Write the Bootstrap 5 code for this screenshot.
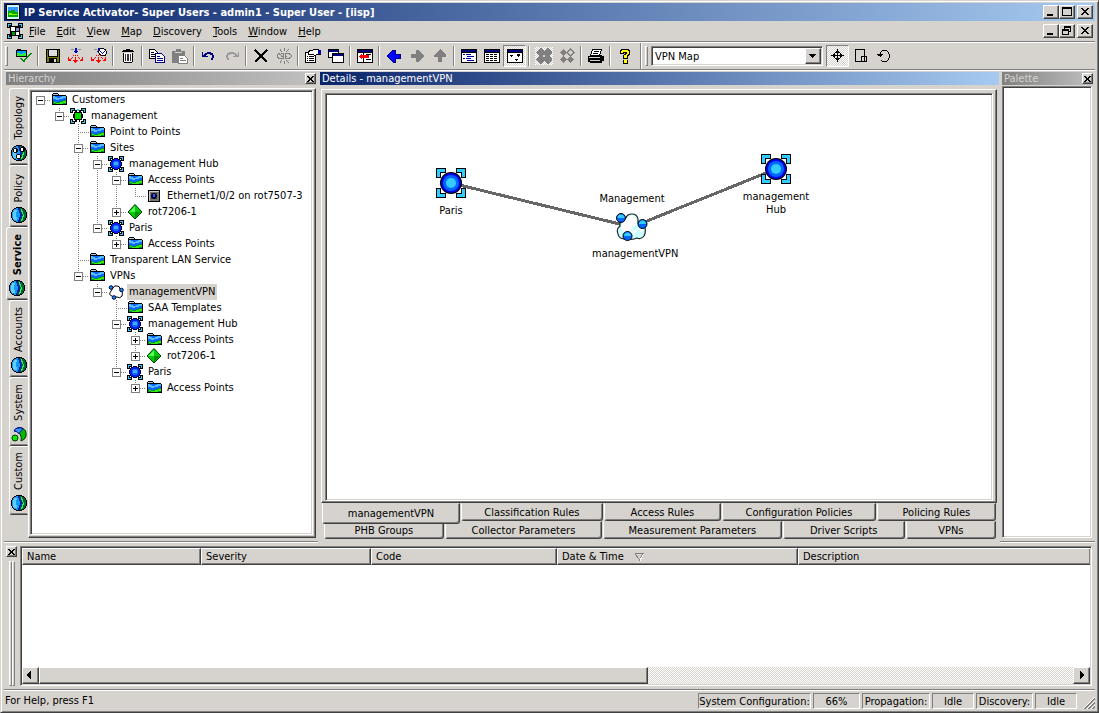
<!DOCTYPE html>
<html lang="en">
<head>
<meta charset="utf-8">
<meta name="viewport" content="width=device-width, initial-scale=1">
<title>IP Service Activator</title>
<link rel="stylesheet" href="https://cdn.jsdelivr.net/npm/bootstrap@5.3.0/dist/css/bootstrap.min.css">
<style>
:root{--face:#d6d3ce;--shade:#808080;--dark:#404040;--lite:#fff}
body{background:var(--face);color:#000;font:11px/13px "DejaVu Sans Condensed","DejaVu Sans","Liberation Sans",sans-serif}
button,select{font:inherit;color:inherit;background:var(--face);border:0;padding:0;border-radius:0}
svg{display:block;flex:none;shape-rendering:crispEdges}
.appwin{min-height:100vh;border:1px solid;border-color:var(--face) var(--dark) var(--dark) var(--face);box-shadow:inset 1px 1px var(--lite),inset -1px -1px var(--shade);padding:2px 3px}
.raised{border:1px solid;border-color:var(--lite) var(--dark) var(--dark) var(--lite);box-shadow:inset -1px -1px var(--shade)}
.sunken{border:1px solid;border-color:var(--shade) var(--lite) var(--lite) var(--shade);box-shadow:inset 1px 1px var(--dark),inset -1px -1px var(--face);padding:1px;background:#fff}
.groove-b{border-bottom:1px solid var(--shade);box-shadow:0 1px var(--lite);margin-bottom:1px}
.titlebar{height:18px;background:linear-gradient(90deg,#0a246a,#a6caf0);color:#fff;font-weight:bold;padding:0 2px}
.winbtn{width:16px;height:14px}
.winbtn.apart{margin-left:2px}
.menubar{height:21px;padding:0 2px 0 3px}
.menubar a{color:#000;text-decoration:none;padding:0 5px 0 6px}
.toolbar{height:27px;padding-left:1px}
.grip{width:3px;height:20px;border:1px solid;border-color:var(--lite) var(--shade) var(--shade) var(--lite)}
.tool{width:23px;height:22px}
.tool[aria-pressed=true]{border:1px solid;border-color:var(--shade) var(--lite) var(--lite) var(--shade)}
.dither{background:repeating-conic-gradient(#fff 0 25%,var(--face) 0 50%) 0 0/2px 2px}
.sepv{width:2px;height:20px;margin:0 2px;border-left:1px solid var(--shade);border-right:1px solid var(--lite)}
.sepv.bandend{height:26px;margin:0 3px 0 4px}
.combo{width:172px;height:20px;margin:0 3px}
.combo select{appearance:none;background:#fff;width:100%;height:16px;padding-left:2px;outline:0}
.combo .arrowbox{top:1px;right:1px;width:16px;height:16px;pointer-events:none;background:var(--face)}
.caption{height:13px;margin:1px 2px 0;padding-left:2px}
.cap-off{background:linear-gradient(90deg,#808080,#c0c0c0);color:var(--face)}
.cap-on{background:linear-gradient(90deg,#0a246a,#a6caf0);color:#fff;margin-right:1px}
.closer{width:11px;height:11px}
.side-left{width:314px}
.side-right{width:95px}
.tabbody{margin-top:3px;padding:0 2px 3px 0}
.tabcol{width:24px}
.treeframe{padding:1px 2px 2px 1px}
.mapframe{padding:3px 3px 1px;margin:4px 3px 0}
.palettebox{margin:1px 3px 3px 2px}
.vtab{width:19px;border:1px solid;border-color:var(--lite) transparent var(--dark) var(--lite);border-radius:3px 0 0 3px;box-shadow:inset 0 -1px var(--shade);padding:4px 0 3px}
.vtab.on{width:22px;font-weight:bold}
.vtab span{writing-mode:vertical-rl;transform:rotate(180deg)}
.vtab svg{margin-top:5px}
.h-long{height:77px}
.h-mid{height:69px}
.h-on{height:73px}
.h-short{height:62px}
.tree,.tree ul{list-style:none;margin:0;padding:0}
.tree li{background:repeating-linear-gradient(var(--shade) 0 1px,transparent 1px 2px) 8px 0/1px 100% no-repeat}
.tree li:last-child{background-size:1px 8px}
.tree>li{background:none!important}
.tree ul{padding-left:19px}
.node{height:16px}
.twig{width:19px;height:16px}
.lbl{margin-left:3px;padding:0 2px;height:16px;line-height:15px}
.lbl.sel{background:var(--face)}
.pin{width:80px;text-align:center}
.pin svg{margin:0 auto 6px}
.pin span+svg{margin-top:8px}
.btabs{margin:0 4px 0 5px}
.btab{flex:1 1 0;height:18px;border:1px solid;border-color:var(--face) var(--dark) var(--dark) var(--lite);border-radius:0 0 3px 3px;box-shadow:inset -1px -1px var(--shade);white-space:nowrap;margin-left:1px}
.btab.on{height:21px;margin:0 0 -3px -1px;position:relative;z-index:1}
.dock{padding:3px 0}
.dockside{padding:0 3px 0 2px}
.dockmain{margin-right:3px}
.grid{table-layout:fixed;width:100%;border-collapse:separate;border-spacing:0}
.grid th{height:17px;padding:0 4px;font-weight:normal;background:var(--face)}
.listbody{height:119px}
.sbar{height:17px}
.sbtn{width:17px}
.status{height:19px;padding-left:1px}
.pane{border:1px solid;border-color:var(--shade) var(--lite) var(--lite) var(--shade);height:16px;line-height:15px;margin-left:2px;text-align:center;white-space:nowrap}
.w-cfg{width:113px}
.w-pct{width:47px}
.w-prop{width:68px}
.w-idle{width:42px}
.w-disc{width:57px}
</style>
</head>
<body>
<svg width="0" height="0" class="position-absolute" aria-hidden="true">
<defs>
<symbol id="folder" viewBox="0 0 16 16"><path d="M1 2h1V1h5v1h1v1h7v1h1v9H1z" fill="#000"/><path d="M2 2h5v1H2z" fill="#9cf"/><path d="M2 4h13v8H2z" fill="#16f"/><path d="M2 4h2v1h2v1h3V5h2V4h4v2h-3v1H8v1H5V7H2z" fill="#5bf"/><path d="M2 9h2v1h5V9h3V8h3v4H2z" fill="#084"/><path d="M3 10h2v1h4v-1h3V9h3v2h-3v1H5v-1H3z" fill="#3e0"/></symbol>
<symbol id="brackets" viewBox="0 0 16 16"><path d="M0 0h5v3H3v2H0zM11 0h5v5h-3V3h-2zM0 11h3v2h2v3H0zM13 11h3v5h-5v-3h2z" fill="#000"/><path d="M1 1h3v1H2v2H1zM12 1h3v3h-1V2h-2zM1 12h1v2h2v1H1zM14 12h1v3h-3v-1h2z" fill="#3cf"/></symbol>
<symbol id="site" viewBox="0 0 16 16"><use href="#brackets"/><path d="M6 2h4v1h2v1h1v2h1v4h-1v2h-1v1h-2v1H6v-1H4v-1H3v-2H2V6h1V4h1V3h2z" fill="#003"/><path d="M6 3h4v1h2v2h1v4h-1v2h-2v1H6v-1H4v-2H3V6h1V4h2z" fill="#02e"/><path d="M6 5h4v1h1v4h-1v1H6v-1H5V6h1z" fill="#16f"/><path d="M6 6h4v3H6z" fill="#4af"/></symbol>
<symbol id="cust" viewBox="0 0 16 16"><use href="#brackets"/><path d="M5 2h2v2h2V2h2v2h1v2h1v4h-1v2h-2v2H9v-2H7v2H5v-2H4v-2H3V6h1V4h1z" fill="#000"/><path d="M7 1h2v2H7z" fill="#3cf"/><path d="M5 5h6v6H5z" fill="#0d0"/></symbol>
<symbol id="port" viewBox="0 0 16 16"><path d="M2 2h12v12H2z" fill="#000"/><path d="M3 3h10v1H4v9H3z" fill="#ccc"/><path d="M4 4h9v9H4z" fill="#777"/><path d="M5 5h6v6H5z" fill="#333"/><path d="M7 5h2v1h1v1h1v2h-1v1H9v1H7v-1H6V9H5V7h1V6h1z" fill="#003"/><path d="M7 6h2v3H7z" fill="#36f"/></symbol>
<symbol id="router" viewBox="0 0 16 16"><g shape-rendering="auto"><path d="M8 0.500l7 7.500-7 7-7-7z" fill="#0c0" stroke="#030"/><path d="M8 2v6H2.500z" fill="#5f5"/><path d="M8 14V8h5.500z" fill="#080"/></g></symbol>
<symbol id="vpn" viewBox="0 0 16 16"><g shape-rendering="auto"><path d="M5 4q1-3 4-2 3 0 3 3 4 4 2 7-2 3-5 1-3 1-5-1-4-1-1-5z" fill="#fff" stroke="#000"/><g fill="#09f" stroke="#003"><circle cx="3" cy="3.500" r="1.800"/><circle cx="13.500" cy="6" r="1.800"/><circle cx="6" cy="13.500" r="1.800"/></g></g></symbol>
<symbol id="globe" viewBox="0 0 16 16"><path d="M5 0h6v1h2v1h1v1h1v2h1v6h-1v2h-1v1h-1v1h-2v1H5v-1H3v-1H2v-1H1v-2H0V5h1V3h1V2h1V1h2z" fill="#000"/><path d="M5 1h6v1h2v1h1v2h1v6h-1v2h-1v1h-2v1H5v-1H3v-1H2v-2H1V5h1V3h1V2h2z" fill="#19e"/><path d="M3 3h3v2H5v5h1v3H3v-1H2V5h1z" fill="#6cf"/><path d="M7 1h2v2h1v3h1v4h-1v3H9v2H7v-2h1v-3h1V6H8V3H7z" fill="#02a"/><path d="M9 1h2v1h2v1h1v2h1v6h-1v2h-1v1h-2v1H9v-2h1v-3h1V6h-1V3H9z" fill="#063"/><path d="M10 2h1v2h1v3h1v3h-1v3h-1v1h-1v-2h1V9h1V7h-1V5h-1z" fill="#3e6"/></symbol>
<symbol id="globe2" viewBox="0 0 16 16"><use href="#globe"/><path d="M3 3h3v1h1v3H6v1H3V7H2V4h1zM10 2h3v1h1v3h-1v1h-3V6H9V3h1zM6 9h3v1h1v3H9v1H6v-1H5v-3h1z" fill="#000"/><path d="M3 4h2v3H3zM10 3h2v3h-2zM6 10h3v3H6z" fill="#fff"/></symbol>
<symbol id="sysico" viewBox="0 0 16 16"><g shape-rendering="auto"><path d="M3 5q3-5 8-3 5 2 4 8-1 4-5 5 1-4-1-7-2-3-6-3z" fill="#0b0" stroke="#030"/><path d="M3 4.500q3-4 9-2l-4 5q-2-2-5-3z" fill="#39f" stroke="#00a"/><circle cx="4" cy="12" r="3" fill="#0e0" stroke="#030"/></g></symbol>
<symbol id="bigsite" viewBox="0 0 30 30"><path d="M.5.500h9v4h-5v5h-4zM20.500.500h9v9h-4v-5h-5zM.5 20.500h4v5h5v4h-9zM25.500 20.500h4v9h-9v-4h5z" fill="#3cf" stroke="#000"/><g shape-rendering="auto"><circle cx="15" cy="15" r="11" fill="#000"/><circle cx="15" cy="15" r="10" fill="#00e"/><circle cx="15" cy="15" r="8" fill="#06f"/><circle cx="15" cy="15" r="5" fill="#3cf"/></g></symbol>
<symbol id="bigvpn" viewBox="0 0 32 28"><g shape-rendering="auto"><path d="M10 5q1-4 6-4t6 5v4q6 0 7 5 1 4-1 8-3 4-7 2-4 2-9 1-9 1-10-5-2-5 2-8-1-6 6-8z" fill="#cff" stroke="#222" stroke-width="1.200"/><path d="M11 5q5-5 9 0l1 7-4 1-3 5-5 2-4-4q0-7 6-11z" fill="#fff"/><path d="M8 21h4l2-4 2 4 6-5M24 17l3 1" fill="none" stroke="#fff" stroke-width="2"/><g fill="#06f" stroke="#000"><circle cx="5" cy="5" r="4.500"/><circle cx="26.500" cy="11" r="4.500"/><circle cx="11.500" cy="23" r="4.500"/></g><g fill="#3cf"><path d="M1.500 5a3 3 0 0 1 7 0zM23 11a3 3 0 0 1 7 0zM8 23a3 3 0 0 1 7 0z"/></g></g></symbol>
<symbol id="minus" viewBox="0 0 19 16"><path d="M13 8h1M15 8h1M17 8h1" stroke="#808080" transform="translate(0 .5)"/><path d="M4.500 4.500h8v8h-8z" fill="#fff" stroke="#808080"/><path d="M6 8h5v1H6z"/></symbol>
<symbol id="plus" viewBox="0 0 19 16"><path d="M13 8h1M15 8h1M17 8h1" stroke="#808080" transform="translate(0 .5)"/><path d="M4.500 4.500h8v8h-8z" fill="#fff" stroke="#808080"/><path d="M6 8h5v1H6zM8 6h1v5H8z"/></symbol>
<symbol id="leaf" viewBox="0 0 19 16"><path d="M8 8.500h11" stroke="#808080" stroke-dasharray="1 1"/></symbol>
<symbol id="xx" viewBox="0 0 8 7"><path d="M0 0h2v1h1v1h2V1h1V0h2v1H7v1H6v1H5v1h1v1h1v1h1v1H6V6H5V5H3v1H2v1H0V6h1V5h1V4h1V3H2V2H1V1H0z"/></symbol>
<symbol id="smallx" viewBox="0 0 7 6"><path d="M0 0h2v1h1v1h1V1h1V0h2v1H6v1H5v2h1v1h1v1H5V5H4V4H3v1H2v1H0V5h1V4h1V2H1V1H0z"/></symbol>
<symbol id="win" viewBox="0 0 16 16"><path d="M0 1h16v14H0z"/><path d="M1 5h14v9H1z" fill="#fff"/><path d="M1 2h14v2H1z" fill="#000080"/></symbol>
<symbol id="net" viewBox="0 0 16 16"><path d="M3 1h3v1H3zM10 1h3v1h-3z" fill="#888"/><path d="M7 0h2v3h1v1H9v1H7V4H6V3h1z" fill="#00c"/><path d="M7 7h1v1H7zM5 7h1v1H5zM9 7h1v1H9zM4 9h1v1H4zM10 9h1v1h-1zM3 10h1v1H3zM11 10h1v1h-1zM7 9h1v6H7zM0 9h1v2h1v1h1v1H0zM15 9v4h-3v-1h1v-1h1V9zM5 12h5v1H9v1H8v1H7v-1H6v-1H5zM2 11h1v1H2z" fill="#f00"/></symbol>
<symbol id="larrow" viewBox="0 0 14 14"><path d="M0 7l1-1 5-5h2v4h5v4H8v4H6z"/></symbol>
<symbol id="quad" viewBox="0 0 16 16"><path d="M4 0h1l3 3v1l3-4h1l4 4v1l-3 3 3 3v1l-4 4h-1l-3-3-3 3H4l-4-4v-1l3-3-3-3V4z"/></symbol>
<symbol id="undo" viewBox="0 0 14 12"><path d="M0 2h1v3h1V4h1V3h2V2h5v1h2v2h1v3h-1v2h-2V8h1V5H9V4H5v1H4v1h2v1H0z"/></symbol>
</defs>
</svg>

<div class="appwin d-flex flex-column">
<header class="titlebar d-flex align-items-center">
<svg width="14" height="16" viewBox="0 0 14 16" class="me-1"><path d="M1 0h12v1h1v14h-1v1H1v-1H0V1h1z" fill="#000"/><path d="M1 1h12v14H1z" fill="#ccf5ff"/><path d="M2 3h10v5H2z" fill="#39f"/><path d="M2 7h3V6h4v2h3v5H2z" fill="#0a0"/><path d="M3 9h3v1h5v1H3z" fill="#9f0"/></svg>
<span class="flex-grow-1">IP Service Activator- Super Users - admin1 - Super User - [iisp]</span>
<button class="winbtn raised" aria-label="Minimize"><svg width="14" height="12"><path d="M3 8h6v2H3z"/></svg></button>
<button class="winbtn raised" aria-label="Maximize"><svg width="14" height="12"><path d="M2 1h10v9H2zM3 3v6h8V3z" fill-rule="evenodd"/></svg></button>
<button class="winbtn raised apart" aria-label="Close"><svg width="14" height="12"><use href="#xx" x="3" y="2" width="8" height="7"/></svg></button>
</header>
<nav class="menubar groove-b d-flex align-items-center">
<svg width="16" height="16" viewBox="0 0 16 16"><use href="#brackets"/><path d="M3 3h10v10H3z"/><path d="M4 4h4v4H4zM9 9h3v3H9z" fill="#fff"/><path d="M5 9h3v3H5z" fill="#090"/><path d="M9 5h3v3H9z" fill="#88c"/></svg>
<a href="#"><u>F</u>ile</a><a href="#"><u>E</u>dit</a><a href="#"><u>V</u>iew</a><a href="#"><u>M</u>ap</a><a href="#"><u>D</u>iscovery</a><a href="#"><u>T</u>ools</a><a href="#"><u>W</u>indow</a><a href="#"><u>H</u>elp</a>
<span class="flex-grow-1"></span>
<button class="winbtn raised" aria-label="Minimize map"><svg width="14" height="12"><path d="M3 8h6v2H3z"/></svg></button>
<button class="winbtn raised" aria-label="Restore map"><svg width="14" height="12"><path d="M4 1h7v6H9v3H2V4h2zM5 3v1h4v2h1V3zM3 6v3h5V6z" fill-rule="evenodd"/></svg></button>
<button class="winbtn raised apart" aria-label="Close map"><svg width="14" height="12"><use href="#xx" x="3" y="2" width="8" height="7"/></svg></button>
</nav>
<div class="toolbar groove-b d-flex align-items-center" role="toolbar" aria-label="Main">
<span class="grip me-1"></span>
<button class="tool d-flex align-items-center justify-content-center" aria-label="Commit"><svg width="16" height="16" viewBox="0 0 16 16"><path d="M0 2h1V1h4v1h6v7H0z"/><path d="M1 3h9v3H1z" fill="#09f"/><path d="M1 5h3v1h3V5h3v3H1z" fill="#3e3"/><path d="M4 10h2v1h1v1h1v-1h1v-1h1V9h1V8h1V7h1V6h1V5h2v1h-1v1h-1v1h-1v1h-1v1h-1v1h-1v1h-1v1H9v1H7v-1H6v-1H5v-1H4z" fill="#080"/></svg></button>
<span class="sepv"></span>
<button class="tool d-flex align-items-center justify-content-center" aria-label="Save"><svg width="14" height="14"><path d="M0 0h14v14H0z"/><path d="M1 1h1v7h10V1h1v12h-2v-4H3v4H1z" fill="#770"/><path d="M3 1h8v6H3zM8 10h2v3H8z" fill="#ddd"/></svg></button>
<button class="tool d-flex align-items-center justify-content-center" aria-label="Propagate"><svg width="16" height="16"><use href="#net"/></svg></button>
<button class="tool d-flex align-items-center justify-content-center" aria-label="Schedule"><svg width="16" height="16"><use href="#net"/><path d="M9 0h4v1h2v2h1v3h-1v2h-5V7H8V5H7V3h1V1h1z"/><path d="M9 1h4v1h1v1h1v3h-1v1h-4V6H9V5H8V3h1z" fill="#fff"/><path d="M9 3h1v1h1v1h1V4h1V3h1v1h-1v1h-1v1h-1V5h-1V4H9z" fill="#00c"/></svg></button>
<span class="sepv"></span>
<button class="tool d-flex align-items-center justify-content-center" aria-label="Delete"><svg width="12" height="14"><path d="M4 0h4v1h3v1h1v1H0V2h1V1h3zM1 4h10v9h-1v1H2v-1H1z"/><path d="M2 4h8v9H2z" fill="#fff"/><path d="M3 5h1v7H3zM5 5h2v7H5zM8 5h1v7H8z" fill="#333"/></svg></button>
<span class="sepv"></span>
<button class="tool d-flex align-items-center justify-content-center" aria-label="Copy"><svg width="16" height="14"><path d="M.5.500h5l3 3v6h-8z" fill="#fff" stroke="#000"/><path d="M2 3h3M2 5h5M2 7h5" stroke="#000"/><path d="M6.500 4.500h6l3 3v6h-9z" fill="#fff" stroke="#000080"/><path d="M8 7.500h3M8 9.500h6M8 11.500h6" stroke="#000080"/></svg></button>
<button class="tool d-flex align-items-center justify-content-center" aria-label="Paste"><svg width="16" height="15"><path d="M0 2h4V0h5v2h4v12H0z" fill="#808080"/><path d="M3 3h7" stroke="#d6d3ce"/><path d="M6.500 6.500h6l3 3v5h-9z" fill="#fff" stroke="#808080"/><path d="M8 9.500h3M8 11.500h6" stroke="#808080"/></svg></button>
<span class="sepv"></span>
<button class="tool d-flex align-items-center justify-content-center" aria-label="Undo"><svg width="13" height="12" fill="#000080"><use href="#undo"/></svg></button>
<button class="tool d-flex align-items-center justify-content-center" aria-label="Redo"><svg width="14" height="12" fill="#999"><g transform="matrix(-1 0 0 1 14 0)"><use href="#undo"/></g></svg></button>
<span class="sepv"></span>
<button class="tool d-flex align-items-center justify-content-center" aria-label="Remove"><svg width="14" height="14"><path d="M1 1l12 12M13 1L1 13" stroke="#000" stroke-width="2"/></svg></button>
<button class="tool d-flex align-items-center justify-content-center" aria-label="Unlink"><svg width="16" height="16"><path d="M5 5.500h2v2m0 1v2H3L1 9V7l2-1.500zM9 7.500v-2h4L15 7v2l-2 1.500H9v-2M5 8h2M9 8h2M4 1v1l2 2M8 0v3M12 1v1l-2 2M4 15v-1l2-2M8 16v-3M12 15v-1l-2-2" fill="none" stroke="#808080"/></svg></button>
<span class="sepv"></span>
<button class="tool d-flex align-items-center justify-content-center" aria-label="Properties"><svg width="16" height="16"><path d="M.5 4.500h10v10H.500z" fill="#fff" stroke="#000"/><path d="M2 8h1v1H2zM4 8h5v1H4zM2 10h1v1H2zM4 10h5v1H4zM2 12h1v1H2zM4 12h5v1H4z"/><path d="M3 4l3-2h2l2-1h3l2 2v3h-3l-2 2-2-2H6L4 7z" fill="#fff" stroke="#000"/><path d="M13 2h3v4h-3z" fill="#00a"/></svg></button>
<button class="tool d-flex align-items-center justify-content-center" aria-label="Windows"><svg width="16" height="16"><path d="M.5 1.500h10v8H.500z" fill="#fff" stroke="#000"/><path d="M1 2h9v2H1z" fill="#000080"/><path d="M4.500 5.500h11v9h-11z" fill="#fff" stroke="#000"/><path d="M5 6h10v2H5z" fill="#000080"/></svg></button>
<span class="sepv"></span>
<button class="tool d-flex align-items-center justify-content-center" aria-label="Dock pane"><svg width="16" height="16"><use href="#win"/><path d="M6 4h1v10H6zM9 6h5v1H9zM9 11h5v1H9z"/><path d="M2 8h1V7h1V6h1v1h7v3H5v1H4v-1H3V9H2z" fill="#f00"/></svg></button>
<span class="sepv"></span>
<button class="tool d-flex align-items-center justify-content-center" aria-label="Back"><svg width="14" height="14" fill="#00f" stroke="#000080"><use href="#larrow"/></svg></button>
<button class="tool d-flex align-items-center justify-content-center" aria-label="Forward"><svg width="14" height="14" fill="#808080"><g transform="rotate(180 7 7)"><use href="#larrow"/></g></svg></button>
<button class="tool d-flex align-items-center justify-content-center" aria-label="Up"><svg width="14" height="14" fill="#808080"><g transform="rotate(90 7 7)"><use href="#larrow"/></g></svg></button>
<span class="sepv"></span>
<button class="tool d-flex align-items-center justify-content-center" aria-label="Detail view"><svg width="16" height="16"><use href="#win"/><path d="M2 6.500h2m1 0h5M6 8.500h7M2 10.500h2m1 0h5M6 12.500h7" stroke="#00a"/></svg></button>
<button class="tool d-flex align-items-center justify-content-center" aria-label="List view"><svg width="16" height="16"><use href="#win"/><path d="M2 6.500h12M2 8.500h12M2 10.500h12M2 12.500h12" stroke="#000" stroke-dasharray="3 1"/></svg></button>
<button class="tool dither d-flex align-items-center justify-content-center" aria-label="Map view" aria-pressed="true"><svg width="16" height="16"><use href="#win"/><path d="M3 7h3v1H5v1H4V8H3zM10 6h3v2h-1v1h-1V8h-1zM8 11h3v1h-1v1H9v-1H8z" /></svg></button>
<span class="sepv"></span>
<button class="tool d-flex align-items-center justify-content-center" aria-label="Show links"><svg class="dither" width="18" height="18" viewBox="-1 -1 18 18" fill="#808080"><use href="#quad" width="16" height="16"/><path d="M7 7h2v2H7z" fill="#d6d3ce"/></svg></button>
<button class="tool d-flex align-items-center justify-content-center" aria-label="Hide links"><svg width="16" height="16"><path d="M4.500 1L8 4.500 4.500 8 1 4.500zM4.500 8L8 11.500 4.500 15 1 11.500zM11.500 8l3.500 3.500-3.500 3.500L8 11.500z" fill="#808080"/><path d="M11.500 1L15 4.500 11.500 8 8 4.500z" fill="none" stroke="#808080"/></svg></button>
<span class="sepv"></span>
<button class="tool d-flex align-items-center justify-content-center" aria-label="Print"><svg width="16" height="15"><path d="M4.500.500h9l-2 6h-9z" fill="#fff" stroke="#000"/><path d="M6 2.500h5M5 4.500h5" stroke="#000"/><path d="M0 7h2V6h12v1h2v5h-2v2H2v-1H0z"/><path d="M1 8h11v1H1zM2 11h10v1H2z" fill="#ccc"/></svg></button>
<span class="sepv"></span>
<button class="tool d-flex align-items-center justify-content-center" aria-label="Help"><svg width="10" height="15"><path d="M1 0h8v1h1v5H9v1H8v3H3V6h1V5h1V4H4v1H0V1h1z"/><path d="M1 2h1V1h6v1h1v3H8v1H7v3H4V6h2V5h1V3H3v1H1z" fill="#ff0"/><path d="M3 11h5v4H3z"/><path d="M4 11h3v3H4z" fill="#ff0"/></svg></button>
<span class="sepv bandend"></span>
<span class="grip"></span>
<div class="combo sunken position-relative"><select aria-label="Map type"><option>VPN Map</option></select><span class="arrowbox raised position-absolute"><svg width="14" height="14"><path d="M3 5h7v1H9v1H8v1H7v1H6V8H5V7H4V6H3z"/></svg></span></div>
<button class="tool dither d-flex align-items-center justify-content-center" aria-label="Move" aria-pressed="true"><svg width="14" height="14"><path d="M6 1h1v12H6zM1 6h11v1H1zM4 3h5v1H4zM5 2h3v1H5zM4 9h5v1H4zM5 10h3v1H5zM3 4h1v5H3zM2 5h1v3H2zM9 4h1v5H9zM10 5h1v3h-1zM0 6h1v1H0zM12 6h1v1h-1zM6 0h1v1H6z"/></svg></button>
<button class="tool d-flex align-items-center justify-content-center" aria-label="Resize"><svg width="12" height="14"><path d="M.5.500h9v12h-9zM6.500 7.500h5v5h-5z" fill="#d6d3ce" stroke="#000"/></svg></button>
<button class="tool d-flex align-items-center justify-content-center" aria-label="Rotate"><svg width="14" height="14"><path d="M3 5V3h1V2h1V1h5v1h1v1h1v2h1v4h-1v2h-1v1h-1v1H5v-1H4v-1h1v1h5v-1h1V9h1V5h-1V3h-1V2H5v1H4v2h2v1H5v1H4v1H3V7H1V6H0V5z"/></svg></button>
</div>

<div class="d-flex flex-grow-1">
<aside class="side-left groove-b d-flex flex-column flex-shrink-0">
<div class="caption cap-off d-flex align-items-center"><span class="flex-grow-1">Hierarchy</span><button class="closer raised d-flex justify-content-center align-items-center" aria-label="Close hierarchy"><svg width="7" height="6"><use href="#smallx"/></svg></button></div>
<div class="tabbody d-flex flex-grow-1">
<div class="tabcol d-flex flex-column align-items-end">
<button class="vtab h-long d-flex flex-column align-items-center justify-content-end"><span>Topology</span><svg width="16" height="16"><use href="#globe2"/></svg></button>
<button class="vtab h-short d-flex flex-column align-items-center justify-content-end"><span>Policy</span><svg width="16" height="16"><use href="#globe"/></svg></button>
<button class="vtab on h-on d-flex flex-column align-items-center justify-content-end"><span>Service</span><svg width="16" height="16"><use href="#globe"/></svg></button>
<button class="vtab h-long d-flex flex-column align-items-center justify-content-end"><span>Accounts</span><svg width="16" height="16"><use href="#globe"/></svg></button>
<button class="vtab h-mid d-flex flex-column align-items-center justify-content-end"><span>System</span><svg width="16" height="16"><use href="#sysico"/></svg></button>
<button class="vtab h-mid d-flex flex-column align-items-center justify-content-end"><span>Custom</span><svg width="16" height="16"><use href="#globe"/></svg></button>
</div>
<div class="treeframe raised flex-grow-1 d-flex">
<div class="sunken flex-grow-1">
<ul class="tree">
<li><div class="node d-flex"><svg class="twig"><use href="#minus"/></svg><svg width="16" height="16"><use href="#folder"/></svg><span class="lbl">Customers</span></div>
<ul><li><div class="node d-flex"><svg class="twig"><use href="#minus"/></svg><svg width="16" height="16"><use href="#cust"/></svg><span class="lbl">management</span></div>
<ul>
<li><div class="node d-flex"><svg class="twig"><use href="#leaf"/></svg><svg width="16" height="16"><use href="#folder"/></svg><span class="lbl">Point to Points</span></div></li>
<li><div class="node d-flex"><svg class="twig"><use href="#minus"/></svg><svg width="16" height="16"><use href="#folder"/></svg><span class="lbl">Sites</span></div>
<ul>
<li><div class="node d-flex"><svg class="twig"><use href="#minus"/></svg><svg width="16" height="16"><use href="#site"/></svg><span class="lbl">management Hub</span></div>
<ul>
<li><div class="node d-flex"><svg class="twig"><use href="#minus"/></svg><svg width="16" height="16"><use href="#folder"/></svg><span class="lbl">Access Points</span></div>
<ul><li><div class="node d-flex"><svg class="twig"><use href="#leaf"/></svg><svg width="16" height="16"><use href="#port"/></svg><span class="lbl text-nowrap">Ethernet1/0/2 on rot7507-3</span></div></li></ul></li>
<li><div class="node d-flex"><svg class="twig"><use href="#plus"/></svg><svg width="16" height="16"><use href="#router"/></svg><span class="lbl">rot7206-1</span></div></li>
</ul></li>
<li><div class="node d-flex"><svg class="twig"><use href="#minus"/></svg><svg width="16" height="16"><use href="#site"/></svg><span class="lbl">Paris</span></div>
<ul><li><div class="node d-flex"><svg class="twig"><use href="#plus"/></svg><svg width="16" height="16"><use href="#folder"/></svg><span class="lbl">Access Points</span></div></li></ul></li>
</ul></li>
<li><div class="node d-flex"><svg class="twig"><use href="#leaf"/></svg><svg width="16" height="16"><use href="#folder"/></svg><span class="lbl">Transparent LAN Service</span></div></li>
<li><div class="node d-flex"><svg class="twig"><use href="#minus"/></svg><svg width="16" height="16"><use href="#folder"/></svg><span class="lbl">VPNs</span></div>
<ul><li><div class="node d-flex"><svg class="twig"><use href="#minus"/></svg><svg width="16" height="16"><use href="#vpn"/></svg><span class="lbl sel">managementVPN</span></div>
<ul>
<li><div class="node d-flex"><svg class="twig"><use href="#leaf"/></svg><svg width="16" height="16"><use href="#folder"/></svg><span class="lbl">SAA Templates</span></div></li>
<li><div class="node d-flex"><svg class="twig"><use href="#minus"/></svg><svg width="16" height="16"><use href="#site"/></svg><span class="lbl">management Hub</span></div>
<ul>
<li><div class="node d-flex"><svg class="twig"><use href="#plus"/></svg><svg width="16" height="16"><use href="#folder"/></svg><span class="lbl">Access Points</span></div></li>
<li><div class="node d-flex"><svg class="twig"><use href="#plus"/></svg><svg width="16" height="16"><use href="#router"/></svg><span class="lbl">rot7206-1</span></div></li>
</ul></li>
<li><div class="node d-flex"><svg class="twig"><use href="#minus"/></svg><svg width="16" height="16"><use href="#site"/></svg><span class="lbl">Paris</span></div>
<ul><li><div class="node d-flex"><svg class="twig"><use href="#plus"/></svg><svg width="16" height="16"><use href="#folder"/></svg><span class="lbl">Access Points</span></div></li></ul></li>
</ul></li></ul></li>
</ul></li></ul></li>
</ul>
</div></div></div>
</aside>

<main class="flex-grow-1 d-flex flex-column pb-1">
<div class="caption cap-on">Details - managementVPN</div>
<div class="mapframe raised flex-grow-1 d-flex">
<div class="sunken flex-grow-1 position-relative">
<svg width="100%" height="100%" class="position-absolute top-0 start-0"><path d="M125 89L306 133L450 75" fill="none" stroke="#666" stroke-width="3"/></svg>
<div class="pin position-absolute" style="left:85px;top:74px"><svg width="30" height="30"><use href="#bigsite"/></svg>Paris</div>
<div class="pin position-absolute" style="left:266px;top:98px"><span>Management</span><svg width="32" height="28"><use href="#bigvpn"/></svg>managementVPN</div>
<div class="pin position-absolute" style="left:410px;top:60px"><svg width="30" height="30"><use href="#bigsite"/></svg>management<br>Hub</div>
</div></div>
<div class="btabs d-flex align-items-start">
<button class="btab on" style="flex-grow:138">managementVPN</button><button class="btab" style="flex-grow:142">Classification Rules</button><button class="btab" style="flex-grow:117">Access Rules</button><button class="btab" style="flex-grow:154">Configuration Policies</button><button class="btab" style="flex-grow:119">Policing Rules</button>
</div>
<div class="btabs d-flex align-items-end">
<button class="btab" style="flex-grow:120">PHB Groups</button><button class="btab" style="flex-grow:158">Collector Parameters</button><button class="btab" style="flex-grow:180">Measurement Parameters</button><button class="btab" style="flex-grow:122">Driver Scripts</button><button class="btab" style="flex-grow:90">VPNs</button>
</div>
</main>

<aside class="side-right groove-b d-flex flex-column flex-shrink-0">
<div class="caption cap-off d-flex align-items-center"><span class="flex-grow-1">Palette</span><button class="closer raised d-flex justify-content-center align-items-center" aria-label="Close palette"><svg width="7" height="6"><use href="#smallx"/></svg></button></div>
<div class="palettebox sunken flex-grow-1"></div>
</aside>
</div>

<section class="dock groove-b d-flex">
<div class="dockside d-flex flex-column align-items-center">
<button class="closer raised d-flex justify-content-center align-items-center" aria-label="Close faults"><svg width="7" height="6"><use href="#smallx"/></svg></button>
<div class="d-flex flex-grow-1 mt-1"><span class="grip h-100"></span><span class="grip h-100"></span></div>
</div>
<div class="dockmain sunken flex-grow-1 d-flex flex-column">
<div class="listbody flex-grow-1">
<table class="grid">
<colgroup><col style="width:179px"><col style="width:170px"><col style="width:186px"><col style="width:241px"><col></colgroup>
<thead><tr><th class="raised">Name</th><th class="raised">Severity</th><th class="raised">Code</th><th class="raised">Date &amp; Time <svg class="d-inline-block ms-2" width="9" height="8"><path d="M0 .5h8L4.500 7z" fill="none" stroke="#808080"/><path d="M8.500 1L5 7.500" stroke="#fff"/></svg></th><th class="raised border-end-0">Description</th></tr></thead>
<tbody></tbody>
</table>
</div>
<div class="sbar dither d-flex">
<button class="sbtn raised" aria-label="Scroll left"><svg width="15" height="15"><path d="M8 3v8H7v-1H6V9H5V8H4V6h1V5h1V4h1V3z"/></svg></button>
<button class="raised" style="width:57%" aria-label="Scroll thumb"></button>
<button class="sbtn raised ms-auto" aria-label="Scroll right"><svg width="15" height="15"><path d="M6 3h1v1h1v1h1v1h1v2H9v1H8v1H7v1H6z"/></svg></button>
</div>
</div>
</section>

<footer class="status d-flex align-items-center">
<span class="flex-grow-1">For Help, press F1</span>
<span class="pane w-cfg">System Configuration:</span><span class="pane w-pct">66%</span><span class="pane w-prop">Propagation:</span><span class="pane w-idle">Idle</span><span class="pane w-disc">Discovery:</span><span class="pane w-idle">Idle</span>
<svg class="ms-1" width="14" height="16"><path d="M3 16L15 4M7 16l8-8M11 16l4-4" stroke="#808080" stroke-width="2"/><path d="M2 16L15 3M6 16l9-9M10 16l5-5" stroke="#fff"/></svg>
</footer>
</div>
<script src="https://cdn.jsdelivr.net/npm/bootstrap@5.3.0/dist/js/bootstrap.bundle.min.js"></script>
</body>
</html>
